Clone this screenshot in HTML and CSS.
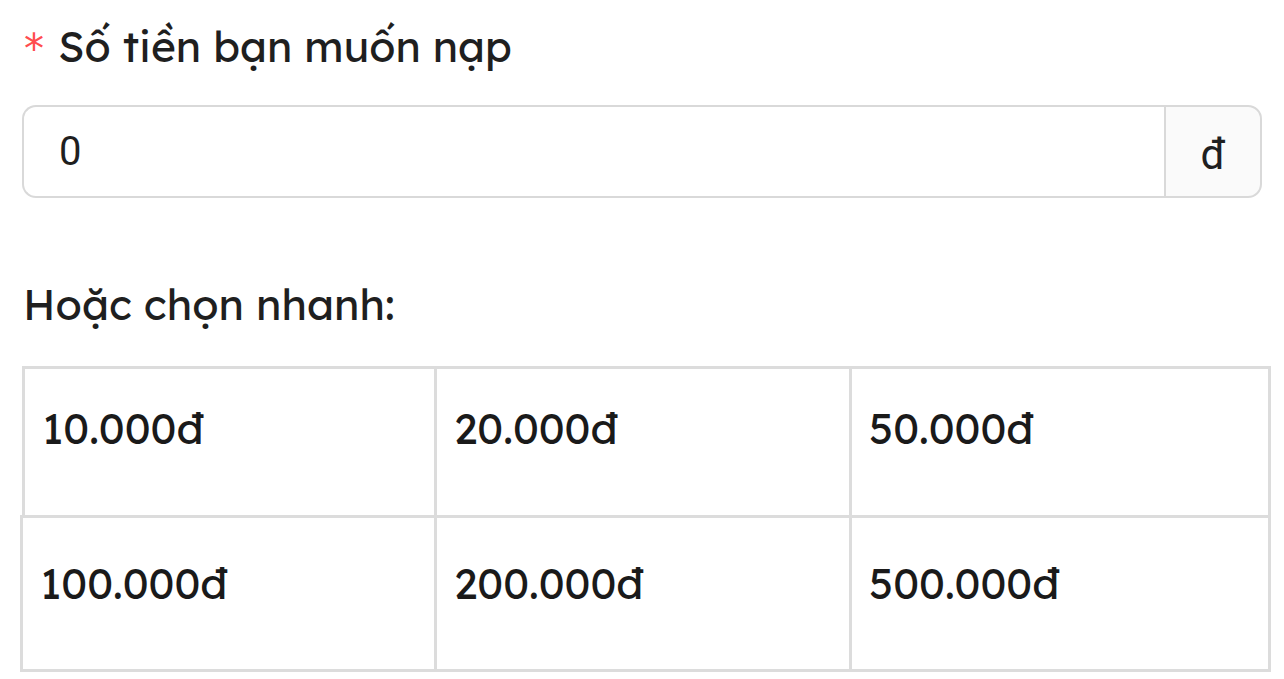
FILE: index.html
```html
<!DOCTYPE html>
<html lang="vi">
<head>
<meta charset="utf-8">
<title>Nạp tiền</title>
<link rel="stylesheet" href="styles.css">
</head>
<body>
<div class="form">
  <div class="label"><span class="req">*</span><span>Số tiền bạn muốn nạp</span></div>
  <div class="input-group">
    <div class="input">0</div>
    <div class="addon">đ</div>
  </div>
  <div class="quick-label">Hoặc chọn nhanh:</div>
  <div class="grid">
    <div class="row row-first">
      <div class="cell c1">10.000đ</div>
      <div class="cell c2">20.000đ</div>
      <div class="cell c3">50.000đ</div>
    </div>
    <div class="row row-second">
      <div class="cell c1">100.000đ</div>
      <div class="cell c2">200.000đ</div>
      <div class="cell c3">500.000đ</div>
    </div>
  </div>
</div>
</body>
</html>
```
FILE: styles.css
```css
html, body {
  margin: 0;
  padding: 0;
  background: #ffffff;
}
body {
  font-family: "Lexend", "Lato", "Noto Sans", sans-serif;
  color: #1f1f1f;
}
.form {
  padding: 14px 0 0 22px;
  width: 1250px;
}
.label {
  display: flex;
  align-items: center;
  font-size: 42.6px;
  line-height: 64px;
  height: 64px;
}
.req {
  color: #ff4d4f;
  font-family: "DejaVu Sans", sans-serif;
  font-size: 40px;
  margin: 6px 14px 0 2px;
  line-height: 1;
}
.input-group {
  margin-top: 27px;
  display: flex;
  width: 1240px;
  height: 93px;
  box-sizing: border-box;
}
.input {
  flex: 1;
  border: 2px solid #d9d9d9;
  border-right: none;
  border-radius: 14px 0 0 14px;
  font-family: "Roboto", "Liberation Sans", sans-serif;
  font-size: 40px;
  padding: 21px 0 0 35px;
  box-sizing: border-box;
  color: #1f1f1f;
}
.addon {
  width: 98px;
  border: 2px solid #d9d9d9;
  border-radius: 0 14px 14px 0;
  background: #fafafa;
  font-family: "Roboto", "Liberation Sans", sans-serif;
  font-size: 42px;
  display: flex;
  align-items: center;
  justify-content: center;
  box-sizing: border-box;
  padding-top: 6px;
}
.quick-label {
  margin-top: 78px;
  font-size: 42.8px;
  line-height: 56px;
  height: 56px;
  padding-left: 1px;
}
.grid {
  margin-top: 34px;
  width: 1250px;
}
.row {
  display: flex;
}
.row-first {
  margin-left: 0;
  height: 152px;
}
.row-second {
  margin-left: -2px;
  height: 154px;
}
.cell {
  box-sizing: border-box;
  border: 3px solid #dcdcdc;
  display: flex;
  align-items: center;
  font-size: 42.6px;
  font-weight: 400;
  padding-left: 17px;
  padding-bottom: 29px;
  background: #fff;
  color: #1a1a1a;
}
.row-second .cell {
  padding-left: 17px;
  padding-bottom: 22px;
  margin-top: -3px;
}
.c1 { width: 415px; }
.c2 { width: 418px; margin-left: -3px; }
.c3 { width: 422px; margin-left: -3px; }
.row-second .c1 { width: 417px; }
```
